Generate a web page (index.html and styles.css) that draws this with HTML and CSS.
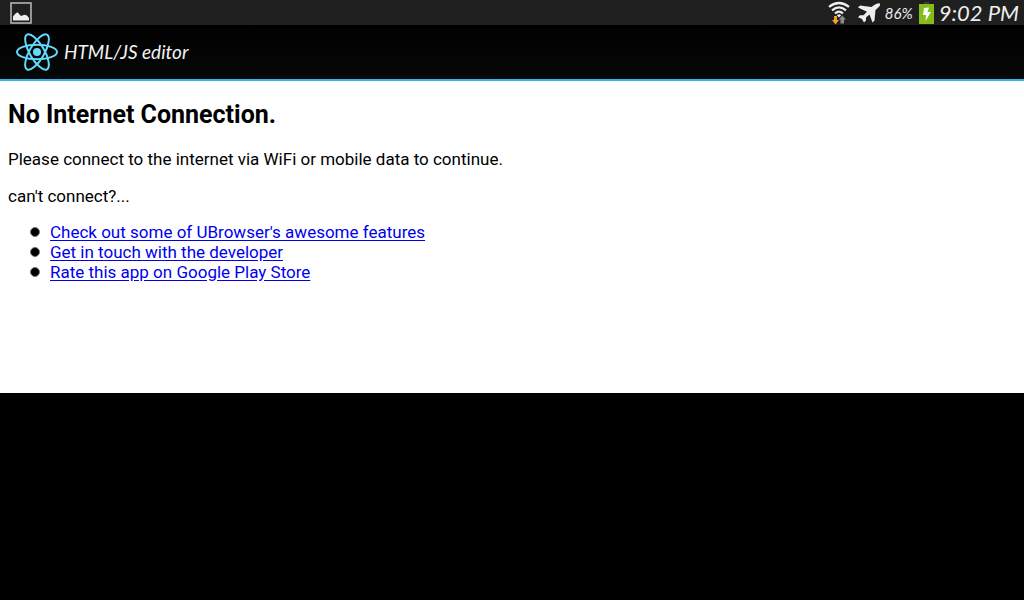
FILE: index.html
```html
<!DOCTYPE html>
<html lang="en">
<head>
<meta charset="utf-8">
<meta name="viewport" content="width=device-width, initial-scale=1">
<title>HTML/JS editor</title>
<link rel="stylesheet" href="styles.css">
</head>
<body>
<div class="status-bar">
  <svg class="icon-picture" viewBox="0 0 22 22" width="22" height="22" aria-hidden="true">
    <rect x="1" y="1" width="20" height="20" fill="none" stroke="#b4b4b4" stroke-width="1.6"/>
    <path d="M3 18.5V14.5L5 12L7.5 10.2L9.5 12.5L11 14L14.5 12.8L17 13.5L19 16V18.5Z" fill="#eee"/>
  </svg>
  <div class="status-icons">
    <svg class="icon-wifi" viewBox="0 0 22 24" width="22" height="24" aria-hidden="true">
      <g fill="none" stroke="#eee" stroke-width="2.2">
        <path d="M1 5.8Q11 -1.8 21 5.8"/>
        <path d="M4 9.3Q11 3.4 18 9.3"/>
        <path d="M7 12.5Q11 8.6 15 12.5"/>
      </g>
      <path d="M8.8 14.2Q11 12.4 13.2 14.2L11 16.4Z" fill="#eee"/>
      <path d="M6 15H9V19H11L7.5 23.5L4 19H6Z" fill="#f0a02c"/>
      <path d="M14.2 14.5L18 18.5H16V22.5H12.5V18.5H10.8Z" fill="#8c8c8c"/>
    </svg>
    <svg class="icon-plane" viewBox="0 0 24 22" width="24" height="22" aria-hidden="true">
      <path d="M20.5 1.6Q23.8 0.6 23 3.2Q22.3 4.8 18.5 8L17.5 18.5L15.5 20.5L12.5 12.6L9 15.5L9 18.5L7 20.5L5 17L1 15.2L3 13.2L6.5 13.3L10 9.7L1 5.5L3 3.5L14.5 5Q18.5 2 20.5 1.6Z" fill="#eee"/>
    </svg>
    <span class="battery-level">86%</span>
    <svg class="icon-battery" viewBox="0 0 15 22" width="15" height="22" aria-hidden="true">
      <path d="M5 0H10V2H5Z" fill="#3c3c3c"/>
      <path d="M0 2H15V22H0Z" fill="#84bd1a"/>
      <path d="M5 6L10 5.5L8.5 10H12L6.5 19L7 13H4Z" fill="#fff"/>
    </svg>
    <time class="clock">9:02 PM</time>
  </div>
</div>
<header class="app-bar">
  <svg class="logo" viewBox="0 0 42 38" width="42" height="38" aria-hidden="true">
    <g fill="none" stroke="#61dafb" stroke-width="2">
      <ellipse cx="21" cy="19" rx="20" ry="7.3"/>
      <ellipse cx="21" cy="19" rx="20" ry="7.3" transform="rotate(60 21 19)"/>
      <ellipse cx="21" cy="19" rx="20" ry="7.3" transform="rotate(120 21 19)"/>
    </g>
    <circle cx="21" cy="19" r="4" fill="#61dafb"/>
  </svg>
  <span class="app-title">HTML/JS editor</span>
</header>
<main class="page">
  <h1 class="heading">No Internet Connection.</h1>
  <p class="text">Please connect to the internet via WiFi or mobile data to continue.</p>
  <p class="text">can't connect?...</p>
  <ul class="links">
    <li><a href="#features">Check out some of UBrowser's awesome features</a></li>
    <li><a href="#contact">Get in touch with the developer</a></li>
    <li><a href="#rate">Rate this app on Google Play Store</a></li>
  </ul>
</main>
</body>
</html>
```
FILE: styles.css
```css
* {
  box-sizing: border-box;
}

body {
  margin: 0;
  background: #000;
  font-family: Roboto, sans-serif;
  font-size: 17px;
  line-height: 20px;
}

.status-bar {
  display: flex;
  align-items: center;
  justify-content: space-between;
  height: 25px;
  padding: 0 5px 0 10px;
  background: #1f1f1f;
  color: #eee;
}

.status-icons {
  display: flex;
  align-items: center;
}

.icon-plane {
  margin: 0 4px 0 7px;
}

.battery-level {
  width: 34px;
  font-family: Lato, sans-serif;
  font-size: 15px;
  font-style: italic;
}

.clock {
  margin-left: 5px;
  font-family: Lato, sans-serif;
  font-size: 22px;
  font-style: italic;
  white-space: nowrap;
}

.app-bar {
  display: flex;
  align-items: center;
  gap: 6px;
  height: 56px;
  padding: 0 16px;
  border-bottom: 2px solid #33b5e5;
  background: linear-gradient(#000, #060807);
  color: #f3f3f3;
}

.logo {
  overflow: visible;
}

.app-title {
  font-family: Lato, sans-serif;
  font-size: 19px;
  font-style: italic;
}

.page {
  min-height: 52vh;
  padding: 19px 8px;
  background: #fff;
  color: #000;
}

.heading {
  margin: 0 0 19px;
  font-size: 25px;
  line-height: 30px;
}

.text {
  margin: 0 0 17px;
}

.links {
  margin: -1px 0 0;
  padding-left: 23px;
  list-style: none;
}

.links li {
  display: flex;
  align-items: center;
  gap: 11px;
}

.links li::before {
  content: "";
  width: 8px;
  height: 8px;
  margin-left: -1px;
  margin-right: -1px;
  border: 1px solid #777;
  border-radius: 50%;
  background: #000;
}

.links a {
  color: #0000ee;
  text-decoration-color: #0000ee;
  text-underline-offset: 2px;
}
```
